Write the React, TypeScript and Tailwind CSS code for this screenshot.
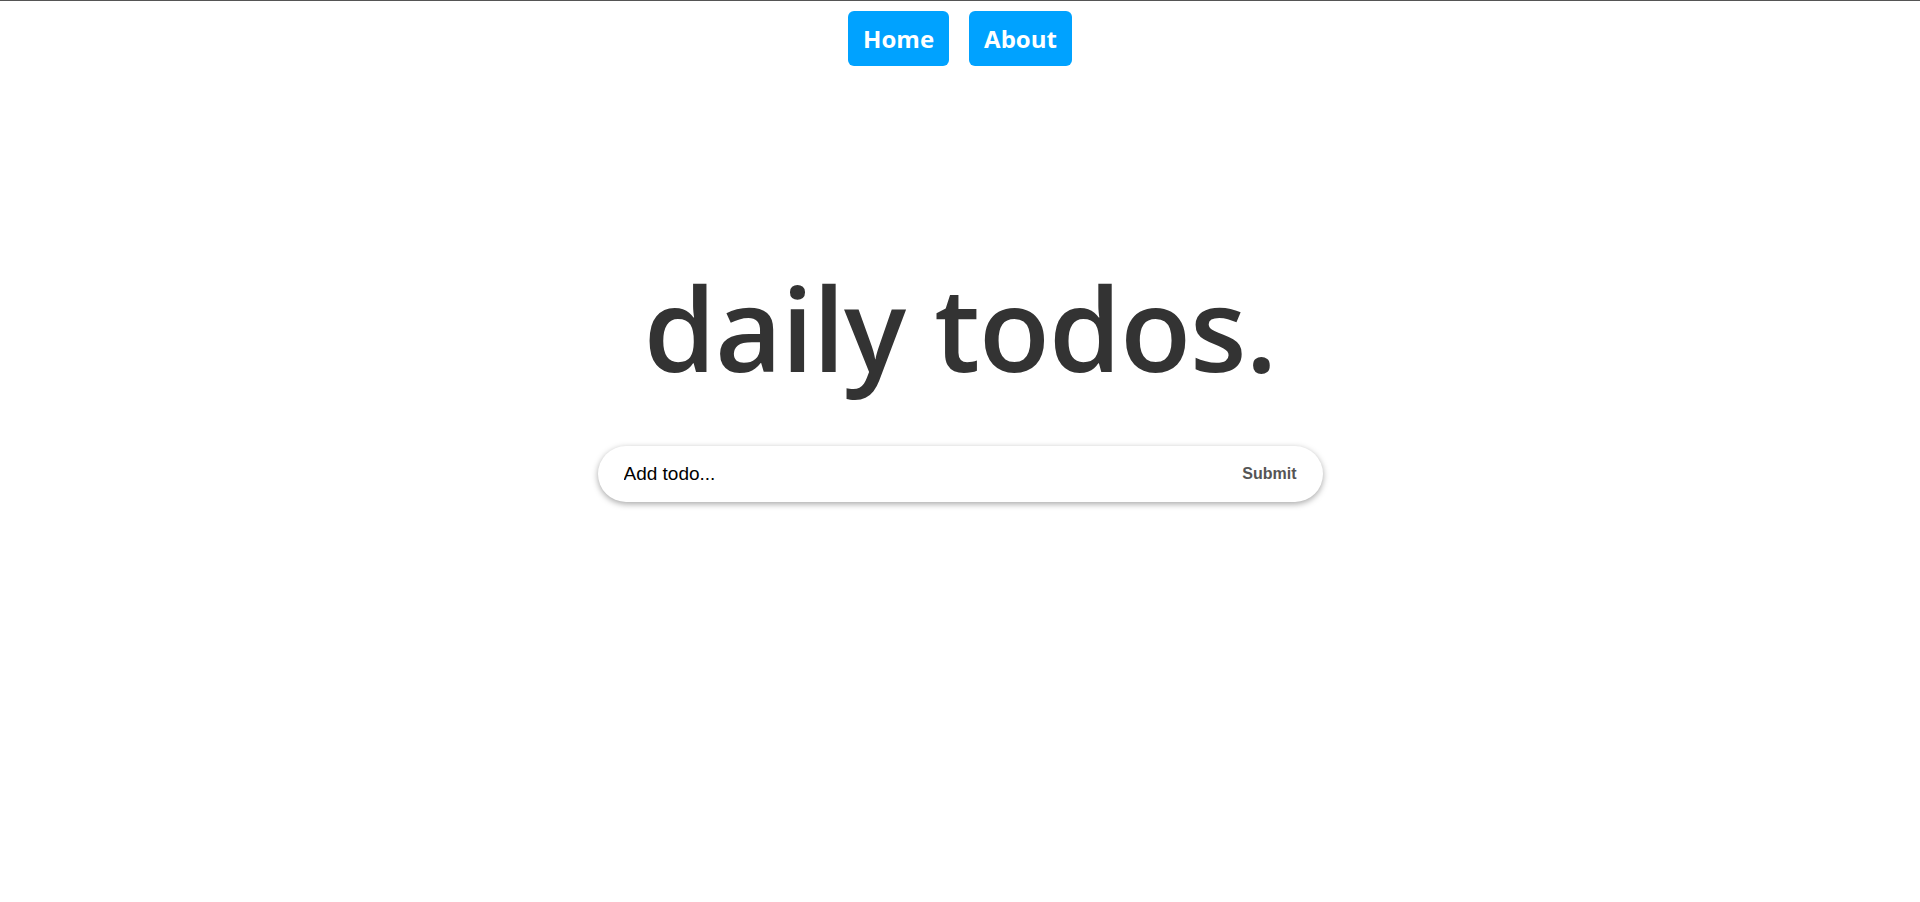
import React, { useState } from 'react';

const NavButton: React.FC<{ label: string }> = ({ label }) => (
  <a
    href="#"
    className="flex h-[55px] items-center rounded-md bg-[#00a2ff] px-[15px] font-['Open_Sans',sans-serif] text-[24px] font-bold text-white"
  >
    {label}
  </a>
);

const App: React.FC = () => {
  const [todo, setTodo] = useState('');

  return (
    <div className="min-h-[902px] border-t border-[#555] bg-white">
      {/* nav */}
      <nav className="flex justify-center gap-5 pt-[10px]">
        <NavButton label="Home" />
        <NavButton label="About" />
      </nav>

      {/* title */}
      <h1 className="mt-[196px] text-center font-['Open_Sans',sans-serif] text-[116px] leading-[130px] font-semibold tracking-[-1px] text-[#333]">
        daily todos.
      </h1>

      {/* form */}
      <form
        className="mx-auto mt-[54px] flex h-[56px] w-[725px] items-center rounded-full bg-white pl-[26px] pr-[26px] shadow-[0_2px_6px_rgba(0,0,0,0.35)]"
        onSubmit={(e) => {
          e.preventDefault();
          setTodo('');
        }}
      >
        <input
          autoFocus
          value={todo}
          onChange={(e) => setTodo(e.target.value)}
          placeholder="Add todo..."
          className="flex-1 bg-transparent font-['Liberation_Sans',Arial,sans-serif] text-[19px] text-black caret-black outline-none placeholder:text-black"
        />
        <button
          type="submit"
          className="font-['Liberation_Sans',Arial,sans-serif] text-[16px] font-bold text-[#555]"
        >
          Submit
        </button>
      </form>
    </div>
  );
};

export default App;
